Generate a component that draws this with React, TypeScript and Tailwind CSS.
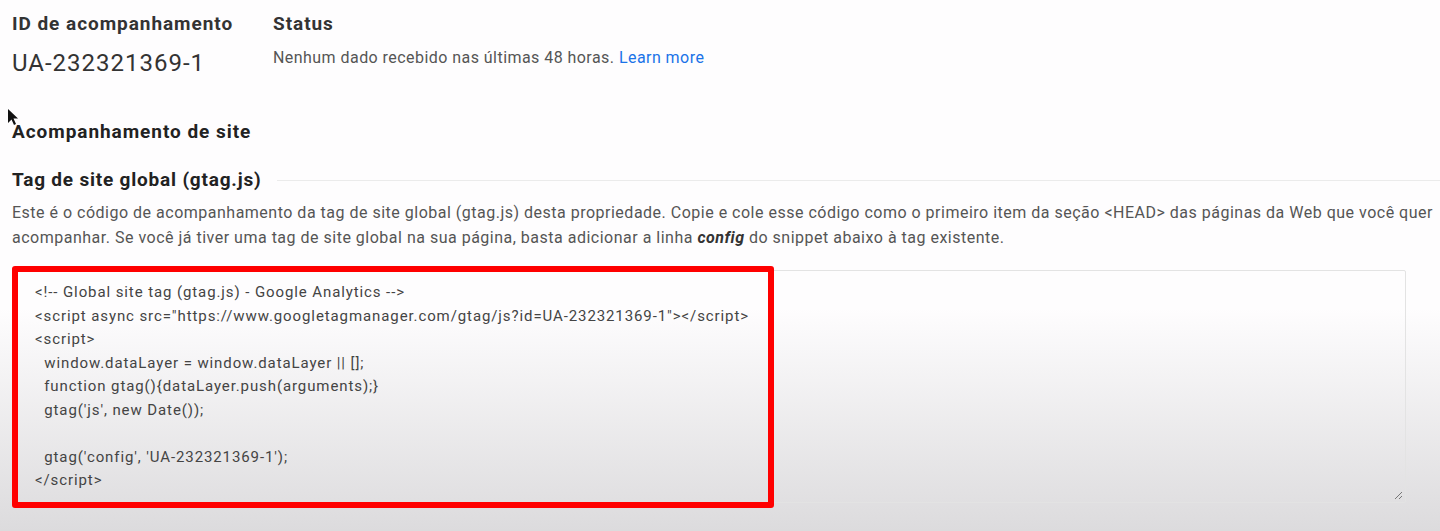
const codeLines = [
  "<!-- Global site tag (gtag.js) - Google Analytics -->",
  '<script async src="https://www.googletagmanager.com/gtag/js?id=UA-232321369-1"></script>',
  "<script>",
  "  window.dataLayer = window.dataLayer || [];",
  "  function gtag(){dataLayer.push(arguments);}",
  "  gtag('js', new Date());",
  "",
  "  gtag('config', 'UA-232321369-1');",
  "</script>",
];

function Cursor() {
  return (
    <svg
      className="absolute left-[7px] top-[108px]"
      width="12"
      height="19"
      viewBox="0 0 12 19"
    >
      <path d="M1 1 L1 15 L4.5 11.5 L7 17 L9 16 L6.5 10.5 L11 10.5 Z" fill="#111" />
    </svg>
  );
}

export default function App() {
  return (
    <div
      className="relative w-[1440px] h-[531px] overflow-hidden bg-[linear-gradient(to_bottom,#fefdfe_0%,#fefdfe_58%,#dcdbdd_100%)] text-[#333]"
      style={{ fontFamily: "Roboto, 'Liberation Sans', sans-serif" }}
    >
      <Cursor />

      {/* Header: id + status */}
      <div className="flex pl-3 pt-[12px]">
        <div className="w-[261px]">
          <h3 className="text-[19px] leading-6 font-bold tracking-[0.95px] text-[#333]">ID de acompanhamento</h3>
          <div className="mt-[11px] text-[24px] leading-8 tracking-[1px] text-[#333]">UA-232321369-1</div>
        </div>
        <div>
          <h3 className="text-[19px] leading-6 font-bold tracking-[0.95px] text-[#333]">Status</h3>
          <p className="mt-[10px] text-[16px] leading-6 tracking-[0.45px] text-[#555]">
            Nenhum dado recebido nas últimas 48 horas.{' '}
            <span className="text-[#1a73e8]">Learn more</span>
          </p>
        </div>
      </div>

      {/* Site tracking */}
      <h3 className="mt-[41px] pl-3 text-[19px] leading-6 font-bold tracking-[0.95px] text-[#222]">
        Acompanhamento de site
      </h3>

      <div className="mt-[24px] flex items-center pl-3">
        <h4 className="text-[19px] leading-6 font-bold tracking-[0.8px] text-[#222]">Tag de site global (gtag.js)</h4>
        <div className="ml-4 h-px flex-1 bg-[#ebebeb]" />
      </div>

      <p className="mt-[8px] pl-3 text-[16px] leading-[25px] tracking-[0.5px] whitespace-nowrap text-[#555]">
        Este é o código de acompanhamento da tag de site global (gtag.js) desta propriedade. Copie e cole esse
        código como o primeiro item da seção &lt;HEAD&gt; das páginas da Web que você quer
        <br />
        acompanhar. Se você já tiver uma tag de site global na sua página, basta adicionar a linha{' '}
        <b className="italic font-bold text-[#333]">config</b> do snippet abaixo à tag existente.
      </p>

      {/* Code snippet */}
      <div className="relative ml-[14px] mt-[20px] h-[233px] w-[1392px] rounded-[2px] border border-[#e3e3e3]">
        <div className="pl-[20px] pt-[10px] text-[15px] leading-[23.5px] tracking-[0.9px] text-[#444] whitespace-pre">
          {codeLines.map((line, i) => (
            <div key={i} className="h-[23.5px]">
              {line}
            </div>
          ))}
        </div>
        <svg className="absolute right-[2px] bottom-[2px]" width="9" height="9" viewBox="0 0 9 9">
          <path d="M8 1 L1 8 M8 5 L5 8" stroke="#777" strokeWidth="1" />
        </svg>
      </div>

      {/* Red highlight annotation */}
      <div className="absolute left-[12px] top-[266px] h-[242px] w-[762px] rounded-[3px] border-[6px] border-[#ff0000]" />
    </div>
  );
}
